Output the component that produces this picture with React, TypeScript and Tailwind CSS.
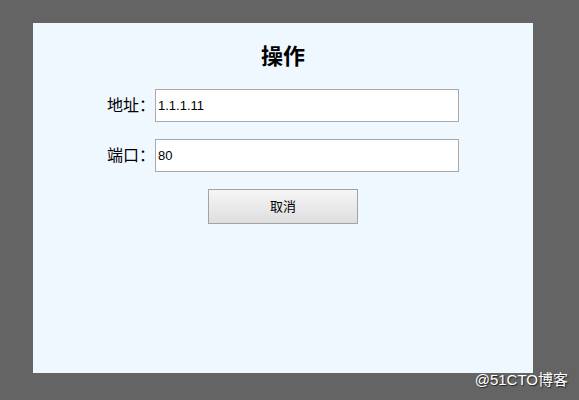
export default function App() {
  return (
    <div
      className="relative w-[579px] h-[400px] bg-[#646464] pt-[23px] pl-[33px]"
      style={{ fontFamily: '"Liberation Sans", "Noto Sans CJK SC", sans-serif' }}
    >
      <div className="w-[500px] h-[350px] bg-[#eff7ff] flex flex-col items-center pt-[20px]">
        <h2 className="text-[22px] leading-[28px] font-bold text-black">操作</h2>

        <div className="mt-[18px] flex flex-col gap-[17px]">
          <div className="flex items-center">
            <label className="w-[48px] text-[16px] text-black">地址：</label>
            <input
              defaultValue="1.1.1.11"
              className="w-[304px] h-[33px] bg-white border border-[#a9a9a9] px-[2px] text-[13px] text-black outline-none"
            />
          </div>
          <div className="flex items-center">
            <label className="w-[48px] text-[16px] text-black">端口：</label>
            <input
              defaultValue="80"
              className="w-[304px] h-[33px] bg-white border border-[#a9a9a9] px-[2px] text-[13px] text-black outline-none"
            />
          </div>
        </div>

        <button className="mt-[17px] w-[150px] h-[35px] border border-[#a3a3a3] bg-gradient-to-b from-[#f6f6f6] to-[#dedede] text-[13px] text-black">
          取消
        </button>
      </div>

      {/* 水印 */}
      <span className="absolute right-[11px] bottom-[12px] text-[15px] leading-[16px] text-white [text-shadow:1px_1px_1px_#222]">
        @51CTO博客
      </span>
    </div>
  );
}
